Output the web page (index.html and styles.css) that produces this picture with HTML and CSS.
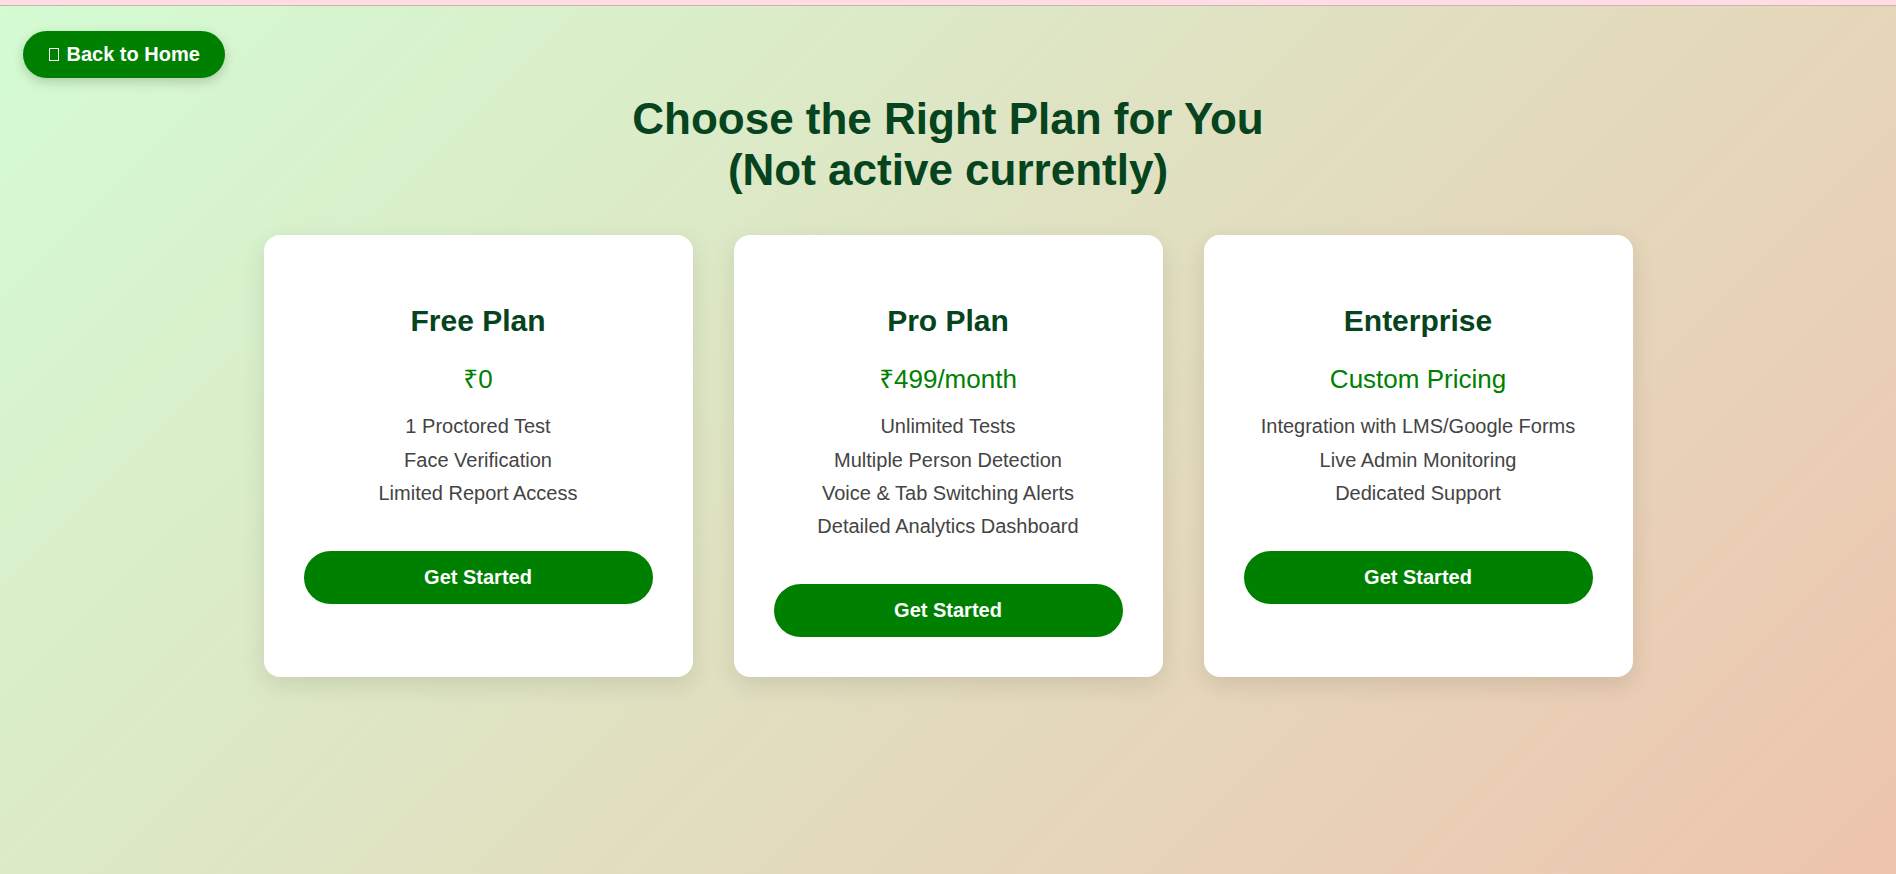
FILE: index.html
```html
<!DOCTYPE html>
<html lang="en">
<head>
<meta charset="utf-8">
<title>Pricing</title>
<link rel="stylesheet" href="styles.css">
</head>
<body>
<div class="topbar"></div>
<main class="page">
  <div class="nav">
    <a class="back-btn" href="#"><span class="tofu"></span>Back to Home</a>
  </div>
  <h1 class="heading">Choose the Right Plan for You<br>(Not active currently)</h1>
  <section class="plans">
    <div class="card">
      <h2 class="plan-name">Free Plan</h2>
      <p class="price">₹0</p>
      <ul class="features">
        <li>1 Proctored Test</li>
        <li>Face Verification</li>
        <li>Limited Report Access</li>
      </ul>
      <button class="cta">Get Started</button>
    </div>
    <div class="card">
      <h2 class="plan-name">Pro Plan</h2>
      <p class="price">₹499/month</p>
      <ul class="features">
        <li>Unlimited Tests</li>
        <li>Multiple Person Detection</li>
        <li>Voice &amp; Tab Switching Alerts</li>
        <li>Detailed Analytics Dashboard</li>
      </ul>
      <button class="cta">Get Started</button>
    </div>
    <div class="card">
      <h2 class="plan-name">Enterprise</h2>
      <p class="price">Custom Pricing</p>
      <ul class="features">
        <li>Integration with LMS/Google Forms</li>
        <li>Live Admin Monitoring</li>
        <li>Dedicated Support</li>
      </ul>
      <button class="cta">Get Started</button>
    </div>
  </section>
</main>
</body>
</html>
```
FILE: styles.css
```css
* { box-sizing: border-box; }
html, body { height: 100%; }
body {
  margin: 0;
  font-family: "Liberation Sans", Arial, sans-serif;
  background: linear-gradient(135deg, #d3fcd3 0%, #eec4ae 100%);
  min-height: 874px;
}
.topbar {
  height: 6px;
  background: #ffdde3;
  border-bottom: 1px solid #cbb4b7;
}
.page {
  padding: 25px 23px 0;
}
.nav {
  display: flex;
}
.back-btn {
  display: inline-block;
  background: #008000;
  color: #fff;
  font-weight: bold;
  font-size: 20px;
  line-height: 23px;
  padding: 12px 25px;
  border-radius: 24px;
  text-decoration: none;
  box-shadow: 0 4px 12px rgba(0, 0, 0, 0.18);
}
.tofu {
  display: inline-block;
  width: 10px;
  height: 13px;
  border: 1.5px solid #fff;
  margin: 0 7.5px 0 1px;
  vertical-align: baseline;
}
.heading {
  margin: 16px 0 39.8px;
  text-align: center;
  font-size: 44px;
  line-height: 50.6px;
  font-weight: bold;
  color: #064420;
}
.plans {
  display: grid;
  grid-template-columns: repeat(3, 429px);
  gap: 41px;
  justify-content: center;
  margin-left: -23px;
  margin-right: -23px;
}
.card {
  background: #fff;
  border-radius: 16px;
  padding: 40px;
  text-align: center;
  box-shadow: 0 8px 24px rgba(0, 0, 0, 0.1);
  display: flex;
  flex-direction: column;
  align-items: stretch;
}
.plan-name {
  margin: 29px 0 0;
  font-size: 30px;
  line-height: 34.5px;
  font-weight: bold;
  color: #064420;
}
.price {
  margin: 26.5px 0 0;
  font-family: "Liberation Sans", "Noto Sans", Arial, sans-serif;
  font-size: 26px;
  line-height: 29.9px;
  color: #008000;
}
.features {
  list-style: none;
  margin: 15.4px 0 0;
  padding: 0;
  font-size: 20px;
  line-height: 33.33px;
  color: #444;
}
.cta {
  margin-top: 40.7px;
  height: 53px;
  border: none;
  border-radius: 27px;
  background: #008000;
  color: #fff;
  font-family: "Liberation Sans", Arial, sans-serif;
  font-weight: bold;
  font-size: 20px;
  cursor: pointer;
}
```
